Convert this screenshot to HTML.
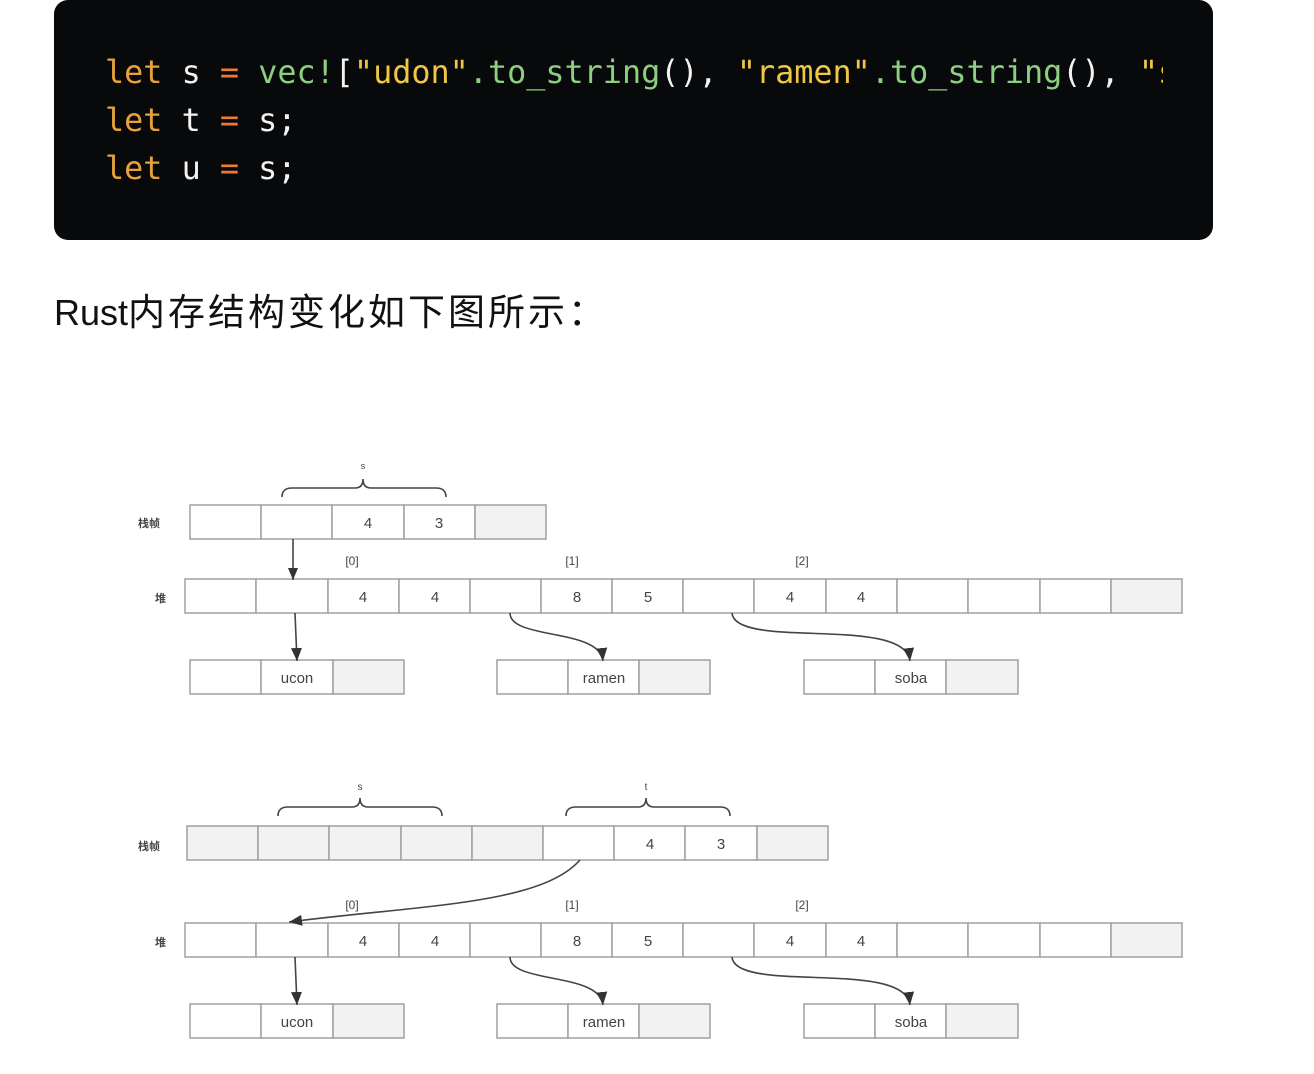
<!DOCTYPE html>
<html><head><meta charset="utf-8"><style>
html,body{margin:0;padding:0;background:#fff;width:1314px;height:1074px;overflow:hidden}
.code{position:absolute;left:54px;top:0;width:1159px;height:240px;background:#08090b;border-radius:14px;overflow:hidden}
.code pre{position:absolute;left:51px;top:49px;margin:0;font-family:"DejaVu Sans Mono","Liberation Mono",monospace;font-size:31.8px;line-height:48px;color:#f2f2f2;white-space:pre;width:1058px;overflow:hidden}
.k{color:#e8a13a}.o{color:#ef7a2d}.g{color:#8ccf7e}.y{color:#f0c744}
.t{position:absolute;left:54px;top:286px;font-family:"Liberation Sans","Noto Sans CJK SC",sans-serif;font-size:36px;color:#111;line-height:54px;white-space:nowrap}
.t span{font-size:37px;letter-spacing:3px}
svg{position:absolute;left:0;top:0}
svg text{font-family:"Liberation Sans","Noto Sans CJK SC",sans-serif;fill:#444}
</style></head><body>
<div class="code"><pre><span class="k">let</span> s <span class="o">=</span> <span class="g">vec!</span>[<span class="y">"udon"</span><span class="g">.to_string</span>(), <span class="y">"ramen"</span><span class="g">.to_string</span>(), <span class="y">"soba"</span>
<span class="k">let</span> t <span class="o">=</span> s;
<span class="k">let</span> u <span class="o">=</span> s;</pre></div>
<div class="t">Rust<span>内存结构变化如下图所示：</span></div>
<svg width="1314" height="1074" viewBox="0 0 1314 1074">
<defs><marker id="a" markerWidth="12" markerHeight="12" refX="12" refY="6" orient="auto" markerUnits="userSpaceOnUse" viewBox="0 0 12 12"><path d="M0 1L12 6L0 11Z" fill="#333"/></marker>
<marker id="b" markerWidth="13" markerHeight="12" refX="13" refY="6" orient="auto" markerUnits="userSpaceOnUse" viewBox="0 0 13 12"><path d="M0 0.5L13 6L0 11.5Z" fill="#333"/></marker></defs>
<g stroke="#a0a0a0" stroke-width="1.5" fill="#fff">
<rect x="190" y="505" width="71" height="34"/><rect x="261" y="505" width="71" height="34"/><rect x="332" y="505" width="72" height="34"/><rect x="404" y="505" width="71" height="34"/><rect x="475" y="505" width="71" height="34" fill="#f2f2f2"/>
<g id="heap">
<rect x="185" y="579" width="71" height="34"/><rect x="256" y="579" width="72" height="34"/><rect x="328" y="579" width="71" height="34"/><rect x="399" y="579" width="71" height="34"/><rect x="470" y="579" width="71" height="34"/><rect x="541" y="579" width="71" height="34"/><rect x="612" y="579" width="71" height="34"/><rect x="683" y="579" width="71" height="34"/><rect x="754" y="579" width="72" height="34"/><rect x="826" y="579" width="71" height="34"/><rect x="897" y="579" width="71" height="34"/><rect x="968" y="579" width="72" height="34"/><rect x="1040" y="579" width="71" height="34"/><rect x="1111" y="579" width="71" height="34" fill="#f2f2f2"/>
</g>
<g id="bx">
<rect x="190" y="660" width="71" height="34"/><rect x="261" y="660" width="72" height="34"/><rect x="333" y="660" width="71" height="34" fill="#f2f2f2"/>
<rect x="497" y="660" width="71" height="34"/><rect x="568" y="660" width="71" height="34"/><rect x="639" y="660" width="71" height="34" fill="#f2f2f2"/>
<rect x="804" y="660" width="71" height="34"/><rect x="875" y="660" width="71" height="34"/><rect x="946" y="660" width="72" height="34" fill="#f2f2f2"/>
</g>
<use href="#heap" y="344"/><use href="#bx" y="344"/>
<g fill="#f2f2f2"><rect x="187" y="826" width="71" height="34"/><rect x="258" y="826" width="71" height="34"/><rect x="329" y="826" width="72" height="34"/><rect x="401" y="826" width="71" height="34"/><rect x="472" y="826" width="71" height="34"/></g>
<rect x="543" y="826" width="71" height="34"/><rect x="614" y="826" width="71" height="34"/><rect x="685" y="826" width="72" height="34"/><rect x="757" y="826" width="71" height="34" fill="#f2f2f2"/>
</g>
<g font-size="15" text-anchor="middle">
<text x="368" y="528">4</text><text x="439" y="528">3</text>
<g id="ht"><text x="363" y="602">4</text><text x="435" y="602">4</text><text x="577" y="602">8</text><text x="648" y="602">5</text><text x="790" y="602">4</text><text x="861" y="602">4</text>
<text x="297" y="683">ucon</text><text x="604" y="683">ramen</text><text x="911" y="683">soba</text>
<text x="352" y="565" font-size="12">[0]</text><text x="572" y="565" font-size="12">[1]</text><text x="802" y="565" font-size="12">[2]</text></g>
<use href="#ht" y="344"/>
<text x="650" y="849">4</text><text x="721" y="849">3</text>
<text x="363" y="469" font-size="9">s</text><text x="360" y="790" font-size="10">s</text><text x="646" y="790" font-size="10">t</text>
</g>
<g font-size="11" font-weight="bold"><text x="138" y="527">栈帧</text><text x="155" y="602">堆</text><text x="138" y="850">栈帧</text><text x="155" y="946">堆</text></g>
<g fill="none" stroke="#444" stroke-width="1.6">
<path d="M282 497Q282 488 292 488L355 488Q363 488 363 479Q363 488 371 488L436 488Q446 488 446 497"/>
<path d="M278 816Q278 807 288 807L352 807Q360 807 360 798Q360 807 368 807L432 807Q442 807 442 816"/>
<path d="M566 816Q566 807 576 807L638 807Q646 807 646 798Q646 807 654 807L720 807Q730 807 730 816"/>
<path d="M293 539L293 580" marker-end="url(#a)"/>
<g id="ar"><path d="M295 613L297 661" marker-end="url(#b)"/>
<path d="M510 613C510 640 600 628 603 661" marker-end="url(#b)"/>
<path d="M732 613C735 650 905 615 910 661" marker-end="url(#b)"/></g>
<use href="#ar" y="344"/>
<path d="M580 860C540 905 420 905 289 922" marker-end="url(#b)"/>
</g>
</svg>
</body></html>
